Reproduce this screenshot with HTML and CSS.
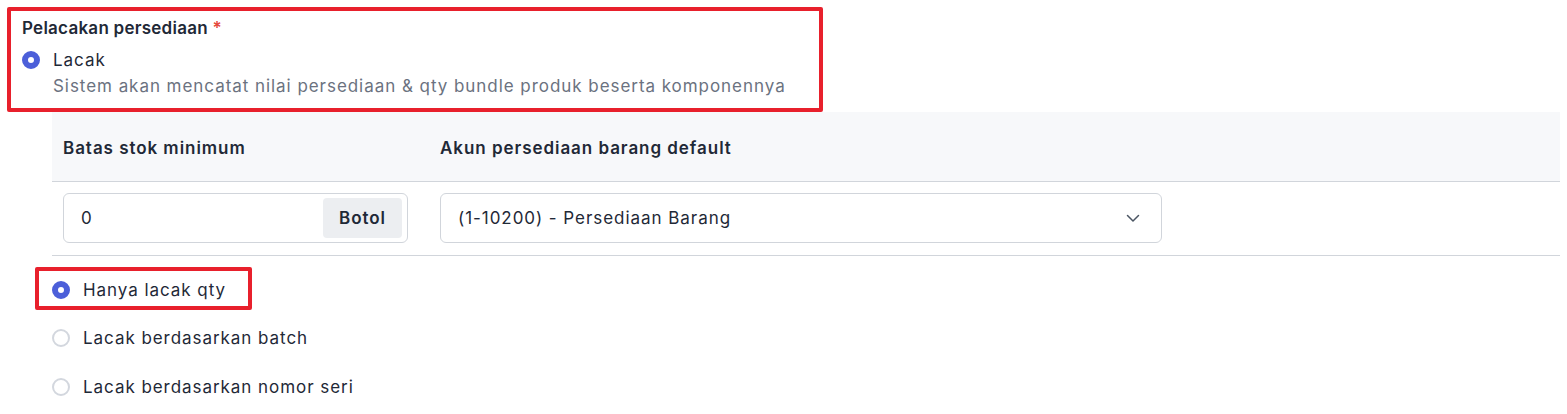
FILE: index.html
```html
<!DOCTYPE html>
<html lang="id">
<head>
<meta charset="utf-8">
<title>Pelacakan persediaan</title>
<link rel="stylesheet" href="styles.css">
</head>
<body>
<div class="page">
  <div class="highlight tracking">
    <div class="field-label">Pelacakan persediaan <span class="req">*</span></div>
    <div class="radio-row">
      <span class="radio checked"></span>
      <span class="radio-text">Lacak</span>
    </div>
    <div class="radio-desc">Sistem akan mencatat nilai persediaan &amp; qty bundle produk beserta komponennya</div>
  </div>

  <div class="stock-table">
    <div class="table-head">
      <div class="th">Batas stok minimum</div>
      <div class="th">Akun persediaan barang default</div>
    </div>
    <div class="table-row">
      <div class="input-group">
        <span class="input-value">0</span>
        <span class="addon">Botol</span>
      </div>
      <div class="select">
        <span class="select-value">(1-10200) - Persediaan Barang</span>
        <svg class="chevron" width="16" height="16" viewBox="0 0 16 16" fill="none"><path d="M2.5 5.5 8 11l5.5-5.5" stroke="#4b5563" stroke-width="1.5" stroke-linecap="round" stroke-linejoin="round"/></svg>
      </div>
    </div>
  </div>

  <div class="options">
    <div class="highlight option-box">
      <div class="radio-row">
        <span class="radio checked"></span>
        <span class="radio-text">Hanya lacak qty</span>
      </div>
    </div>
    <div class="radio-row option">
      <span class="radio"></span>
      <span class="radio-text">Lacak berdasarkan batch</span>
    </div>
    <div class="radio-row option">
      <span class="radio"></span>
      <span class="radio-text">Lacak berdasarkan nomor seri</span>
    </div>
  </div>
</div>
</body>
</html>
```
FILE: styles.css
```css
* { box-sizing: border-box; }
html, body { margin: 0; padding: 0; background: #fff; }
body {
  font-family: Inter, "Noto Sans", sans-serif;
  font-size: 17px;
  letter-spacing: 0.95px;
  color: #1f2937;
}
.page { padding-top: 7px; }

.highlight {
  border: 4px solid #e8202c;
  border-radius: 2px;
}
.tracking {
  width: 816px;
  margin-left: 7px;
  padding: 7px 11px 10px 11px;
}
.field-label {
  font-weight: 600;
  line-height: 20px;
  letter-spacing: 0.25px;
  color: #1f2937;
}
.req { color: #e5483b; }

.radio-row {
  display: flex;
  align-items: center;
  gap: 13px;
  line-height: 24px;
}
.tracking .radio-row { margin-top: 10px; }
.radio {
  width: 18px;
  height: 18px;
  border-radius: 50%;
  border: 2px solid #d3d7de;
  background: #fff;
  flex: none;
}
.radio.checked {
  border: 6px solid #4c5fd9;
}
.radio-text { color: #1f2937; }
.radio-desc {
  margin-left: 31px;
  margin-top: 2px;
  line-height: 24px;
  color: #6b7280;
}

.stock-table {
  margin-left: 52px;
  width: 1508px;
}
.table-head {
  display: grid;
  grid-template-columns: 345px 722px;
  column-gap: 32px;
  padding: 0 11px;
  height: 70px;
  align-items: center;
  background: #f7f8fa;
  border-bottom: 1px solid #d1d5db;
}
.th {
  font-weight: 600;
  color: #1f2937;
  padding-top: 2px;
}
.table-row {
  display: grid;
  grid-template-columns: 345px 722px;
  column-gap: 32px;
  padding: 11px 11px 12px;
  border-bottom: 1px solid #d1d5db;
}
.input-group {
  height: 50px;
  border: 1px solid #d1d5db;
  border-radius: 6px;
  display: flex;
  align-items: center;
  justify-content: space-between;
  padding: 4px 5px 4px 17px;
}
.input-value { color: #1f2937; }
.addon {
  height: 40px;
  width: 79px;
  display: flex;
  align-items: center;
  justify-content: center;
  background: #eceef1;
  border-radius: 4px;
  font-weight: 600;
  color: #1f2937;
}
.select {
  height: 50px;
  border: 1px solid #d1d5db;
  border-radius: 6px;
  display: flex;
  align-items: center;
  justify-content: space-between;
  padding: 0 20px 0 17px;
}
.chevron { flex: none; }

.options {
  margin-left: 35px;
  margin-top: 11px;
}
.option-box {
  width: 217px;
  height: 43px;
  padding: 7px 0 0 13px;
}
.option-box .radio-row { height: 24px; }
.option {
  padding-left: 17px;
  margin-top: 16px;
}
.option + .option { margin-top: 25px; }
```
